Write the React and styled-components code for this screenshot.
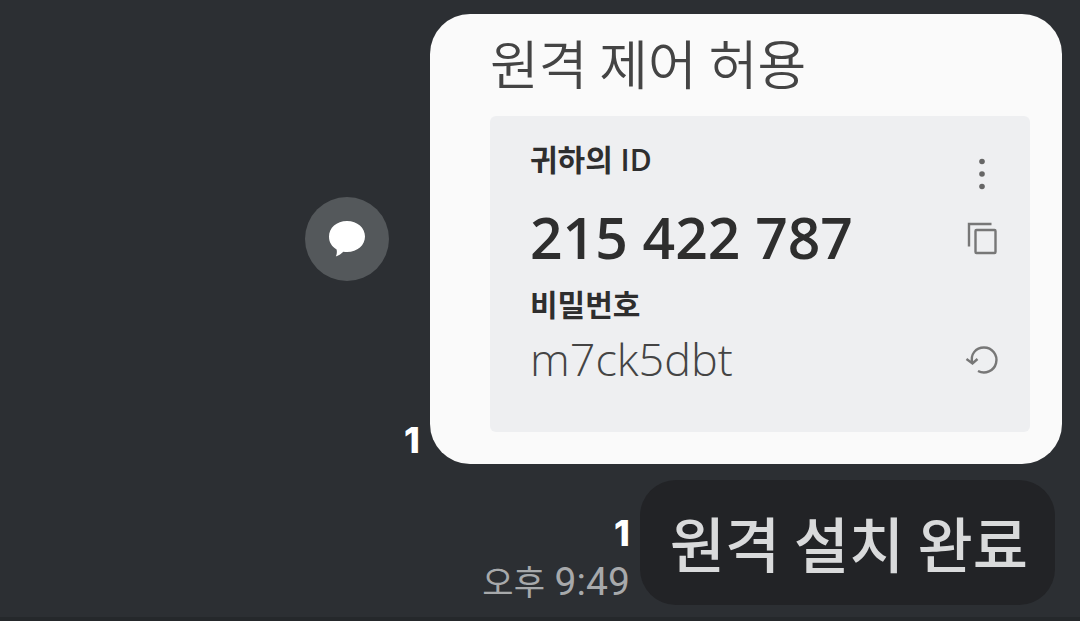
import React from "react"
import styled, { ThemeProvider, createGlobalStyle } from "styled-components"

const theme = {
  fonts: {
    korean: `"Noto Sans CJK KR", sans-serif`,
    panel: `"Open Sans", "Noto Sans CJK KR", sans-serif`,
    time: `Roboto, "Noto Sans CJK KR", sans-serif`,
    count: `Inter, sans-serif`,
  },
  colors: {
    page: "#2c2f33",
    footer: "#25282b",
    bubble: "#222326",
    bubbleText: "#d9dadb",
    share: "#54585b",
    time: "#a7a9ab",
    card: "#fafafa",
    panel: "#eeeff1",
    heading: "#444444",
    text: "#2e2e2e",
    icon: "#777777",
    white: "#ffffff",
  },
}

const GlobalStyle = createGlobalStyle`
  * {
    box-sizing: border-box;
  }
  body {
    margin: 0;
    background: ${theme.colors.page};
  }
  h2, h3, p {
    margin: 0;
  }
`

const Chat = styled.main`
  display: flex;
  flex-direction: column;
  min-height: 100vh;
  padding-top: 14px;
  font-family: ${({ theme }) => theme.fonts.korean};
`

const Message = styled.article`
  display: flex;
  justify-content: flex-end;
  align-items: flex-end;
  gap: 10px;
  padding-right: ${({ $inset }) => $inset}px;
  margin-bottom: ${({ $space = 0 }) => $space}px;
`

const Count = styled.span`
  display: block;
  color: ${({ theme }) => theme.colors.white};
  font-family: ${({ theme }) => theme.fonts.count};
  font-size: 36px;
  font-weight: 800;
  line-height: 48px;
`

const ShareButton = styled.button`
  display: flex;
  flex: none;
  align-items: center;
  justify-content: center;
  align-self: center;
  width: 84px;
  height: 84px;
  margin-right: 5px;
  padding: 0;
  border: 0;
  border-radius: 50%;
  background: ${({ theme }) => theme.colors.share};
  cursor: pointer;
`

const Card = styled.section`
  flex: 0 1 632px;
  padding: 12px 32px 32px 60px;
  border-radius: 40px;
  background: ${({ theme }) => theme.colors.card};
`

const CardTitle = styled.h2`
  color: ${({ theme }) => theme.colors.heading};
  font-size: 53px;
  font-weight: 350;
  line-height: 72px;
  margin-bottom: 18px;
`

const Panel = styled.div`
  display: flex;
  justify-content: space-between;
  padding: 24px 26px 39px 40px;
  border-radius: 6px;
  background: ${({ theme }) => theme.colors.panel};
`

const Label = styled.h3`
  color: ${({ theme }) => theme.colors.text};
  font-family: ${({ theme }) => theme.fonts.panel};
  font-size: 30px;
  font-weight: 600;
  line-height: 40px;
`

const RemoteId = styled.p`
  padding-top: 9px;
  color: ${({ theme }) => theme.colors.text};
  font-family: ${({ theme }) => theme.fonts.panel};
  font-size: 57px;
  font-weight: 600;
  line-height: 96px;
`

const Password = styled.p`
  color: ${({ theme }) => theme.colors.heading};
  font-family: ${({ theme }) => theme.fonts.panel};
  font-size: 45px;
  font-weight: 300;
  line-height: 68px;
`

const Actions = styled.div`
  display: flex;
  flex-direction: column;
  padding-top: 14px;
`

const IconButton = styled.button`
  display: flex;
  align-items: center;
  justify-content: center;
  width: 40px;
  height: 40px;
  margin-bottom: ${({ $space = 0 }) => $space}px;
  padding: 0;
  border: 0;
  background: none;
  color: ${({ theme }) => theme.colors.icon};
  cursor: pointer;
`

const Meta = styled.div`
  display: flex;
  flex-direction: column;
  align-items: flex-end;
  gap: 3px;
`

const Time = styled.time`
  color: ${({ theme }) => theme.colors.time};
  font-family: ${({ theme }) => theme.fonts.time};
  font-size: 39px;
  line-height: 44px;
`

const Meridiem = styled.span`
  font-size: 34px;
`

const Bubble = styled.p`
  padding: 22px 27px 23px 30px;
  border-radius: 36px;
  background: ${({ theme }) => theme.colors.bubble};
  color: ${({ theme }) => theme.colors.bubbleText};
  font-size: 60px;
  font-weight: 500;
  line-height: 80px;
`

const Footer = styled.footer`
  height: 4px;
  margin-top: auto;
  background: ${({ theme }) => theme.colors.footer};
`

const ShareIcon = () => (
  <svg width="40" height="40" viewBox="0 0 40 40" aria-hidden="true">
    <path
      d="M20 2C9.500 2 2 9 2 17.500c0 6 2.800 10 7.600 12.900.500 2.600.300 5-.800 7.200 2.500-.800 5.200-2.700 7.500-4.900 1.200.200 2.500.300 3.700.300 10.500 0 18-7 18-15.500S30.500 2 20 2z"
      fill="#fff"
    />
  </svg>
)

const MoreIcon = () => (
  <svg width="40" height="40" viewBox="0 0 40 40" aria-hidden="true">
    <g fill="#666">
      <circle cx="18" cy="7.500" r="2.800" />
      <circle cx="18" cy="20" r="2.800" />
      <circle cx="18" cy="32.500" r="2.800" />
    </g>
  </svg>
)

const CopyIcon = () => (
  <svg width="40" height="40" viewBox="0 0 40 40" aria-hidden="true">
    <g fill="none" stroke="currentColor" strokeWidth="2.400">
      <path d="M5 27.500V5h22.500" />
      <rect x="11.500" y="11" width="20" height="23" rx="1" />
    </g>
  </svg>
)

const RefreshIcon = () => (
  <svg width="40" height="40" viewBox="0 0 40 40" aria-hidden="true">
    <g fill="none" stroke="currentColor" strokeWidth="2.400">
      <path d="M8.500 23.500C5.500 14.500 12 7.500 20 7.500a12.500 12.500 0 1 1-6 23.500" />
      <path d="M2.500 19l6 4.500 5-4.500" />
    </g>
  </svg>
)

const App = () => (
  <ThemeProvider theme={theme}>
    <GlobalStyle />
    <Chat>
      <Message $inset={18} $space={16}>
        <ShareButton type="button" aria-label="공유">
          <ShareIcon />
        </ShareButton>
        <Count>1</Count>
        <Card>
          <CardTitle>원격 제어 허용</CardTitle>
          <Panel>
            <div>
              <Label>귀하의 ID</Label>
              <RemoteId>215 422 787</RemoteId>
              <Label>비밀번호</Label>
              <Password>m7ck5dbt</Password>
            </div>
            <Actions>
              <IconButton type="button" aria-label="더보기" $space={25}>
                <MoreIcon />
              </IconButton>
              <IconButton type="button" aria-label="복사" $space={81}>
                <CopyIcon />
              </IconButton>
              <IconButton type="button" aria-label="새로고침">
                <RefreshIcon />
              </IconButton>
            </Actions>
          </Panel>
        </Card>
      </Message>
      <Message $inset={25}>
        <Meta>
          <Count>1</Count>
          <Time dateTime="21:49">
            <Meridiem>오후</Meridiem> 9:49
          </Time>
        </Meta>
        <Bubble>원격 설치 완료</Bubble>
      </Message>
      <Footer />
    </Chat>
  </ThemeProvider>
)

export default App
